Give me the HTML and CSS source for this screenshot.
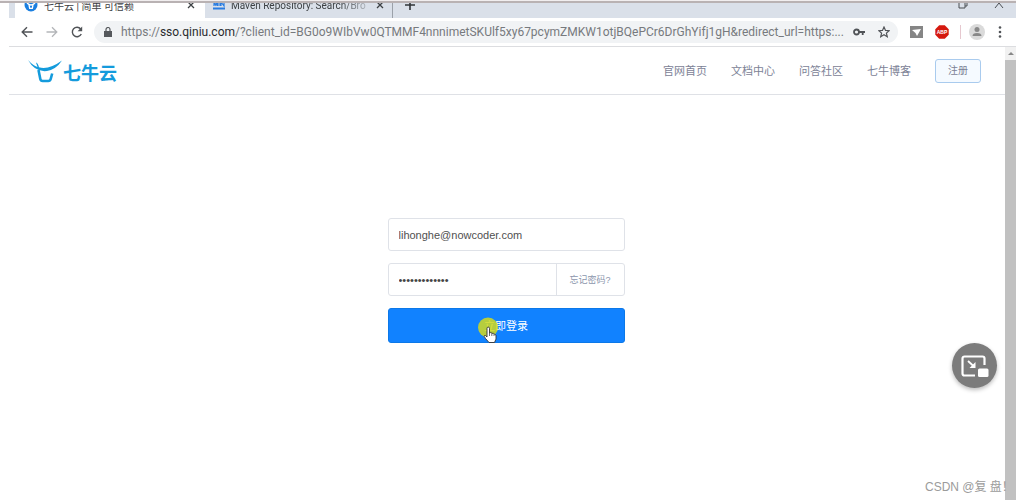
FILE: index.html
```html
<!DOCTYPE html>
<html lang="zh-CN">
<head>
<meta charset="utf-8">
<title>七牛云 | 简单 可信赖</title>
<link rel="stylesheet" href="styles.css">
</head>
<body>
<div class="browser">
  <div class="tabstrip">
    <div class="tab tab-active">
      <svg class="favicon" width="14" height="14" viewBox="0 0 14 14"><circle cx="7" cy="7" r="6.5" fill="#1b7fe0"/><path d="M3 5q4 4 8 0M5 7l.7 3.3h2.6L9 7" fill="none" stroke="#fff" stroke-width="1.3"/></svg>
      <span class="tab-title">七牛云 | 简单 可信赖</span>
      <button class="tab-close" aria-label="关闭"><svg width="8" height="8" viewBox="0 0 8 8"><path d="M1 1l6 6M7 1L1 7" stroke="#3c4043" stroke-width="1.3"/></svg></button>
    </div>
    <div class="tab tab-second">
      <svg class="favicon" width="12" height="14" viewBox="0 0 12 14"><path d="M0 10.500h12" stroke="#2a7de1" stroke-width="2"/><path d="M1 8V4l1.500 3L4 4v4M5 4v4M7 4v4M8 8V4l3 4V4" fill="none" stroke="#2a7de1" stroke-width="1.200"/></svg>
      <span class="tab-title tab-fade">Maven Repository: Search/Bro</span>
      <button class="tab-close" aria-label="关闭"><svg width="8" height="8" viewBox="0 0 8 8"><path d="M1 1l6 6M7 1L1 7" stroke="#3c4043" stroke-width="1.3"/></svg></button>
    </div>
    <button class="new-tab" aria-label="新标签页"><svg width="10" height="10" viewBox="0 0 10 10"><path d="M5 0v10M0 5h10" stroke="#303438" stroke-width="1.6"/></svg></button>
    <div class="window-buttons">
      <button aria-label="还原"><svg width="10" height="10" viewBox="0 0 10 10"><path d="M1 3h6v6H1zM3 3V1h6v6H7" fill="none" stroke="#4a4e53"/></svg></button>
      <button aria-label="关闭窗口"><svg width="10" height="10" viewBox="0 0 10 10"><path d="M1 9l4-5 4 5" fill="none" stroke="#4a4e53"/></svg></button>
    </div>
  </div>
  <div class="toolbar">
    <button aria-label="后退"><svg width="12" height="12" viewBox="0 0 12 12"><path d="M11.500 6H1.500M6 1.200L1.200 6 6 10.800" fill="none" stroke="#505357" stroke-width="1.400"/></svg></button>
    <button aria-label="前进"><svg width="12" height="12" viewBox="0 0 12 12"><path d="M.5 6h10M6 1.200L10.800 6 6 10.800" fill="none" stroke="#b4b6b9" stroke-width="1.300"/></svg></button>
    <button aria-label="刷新"><svg width="12" height="12" viewBox="0 0 12 12"><path d="M10.300 8A4.700 4.700 0 1 1 9.700 3" fill="none" stroke="#505357" stroke-width="1.400"/><path d="M11.200.6v4.600H6.600z" fill="#505357"/></svg></button>
    <div class="omnibox">
      <svg width="8" height="10" viewBox="0 0 8 10"><path d="M0 4h8v6H0z" fill="#55585c"/><path d="M2 4V2.500a2 2 0 0 1 4 0V4" fill="none" stroke="#55585c" stroke-width="1.200"/></svg>
      <span class="url">https://<span class="host">sso.qiniu.com</span>/?client_id=BG0o9WIbVw0QTMMF4nnnimetSKUlf5xy67pcymZMKW1otjBQePCr6DrGhYifj1gH&amp;redirect_url=https:...</span>
      <button class="key" aria-label="密码"><svg width="12" height="8" viewBox="0 0 12 8"><circle cx="3.500" cy="4" r="2.500" fill="none" stroke="#505357" stroke-width="1.800"/><path d="M6 4h6M9.700 4v3" stroke="#505357" stroke-width="1.800"/></svg></button>
      <button aria-label="收藏"><svg width="12" height="12" viewBox="0 0 12 12"><path d="M6 1l1.500 3.400 3.700.3-2.800 2.400.9 3.600L6 8.800l-3.300 1.900.9-3.600L.8 4.700l3.700-.3z" fill="none" stroke="#505357" stroke-width="1.200"/></svg></button>
    </div>
    <button class="ext" aria-label="扩展"><svg width="13" height="12" viewBox="0 0 13 12"><path d="M0 0h13v12H0z" fill="#858585"/><path d="M2 4l9-1-4 7-1.500-3z" fill="#fff"/></svg></button>
    <button class="adblock" aria-label="Adblock Plus"><svg width="14" height="14" viewBox="0 0 14 14"><path d="M4.200.3h5.600l3.900 3.900v5.600l-3.900 3.900H4.200L.3 9.800V4.200z" fill="#d5190f"/><text x="7" y="9" text-anchor="middle" class="adblock-text">ABP</text></svg></button>
    <span class="divider"></span>
    <button class="avatar" aria-label="用户"><svg width="16" height="16" viewBox="0 0 16 16"><circle cx="8" cy="8" r="8" fill="#dadada"/><circle cx="8" cy="5.500" r="2.500" fill="#888"/><path d="M3.500 12q0-3 4.500-3t4.500 3z" fill="#888"/></svg></button>
    <button class="menu" aria-label="菜单"><svg width="4" height="12" viewBox="0 0 4 12"><g fill="#505357"><circle cx="2" cy="1.500" r="1.300"/><circle cx="2" cy="6" r="1.300"/><circle cx="2" cy="10.500" r="1.300"/></g></svg></button>
  </div>
  <div class="viewport">
    <div class="page">
      <header class="site-header">
        <a class="brand" href="#">
          <svg width="34" height="24" viewBox="0 0 34 24"><path d="M0 1Q5 6.500 9.500 8L8 3.500q2 .5 3 4.800Q21 11 34 1.500 28 10.500 19 12 7 13.500 0 1z" fill="#149bdc"/><path d="M10.500 11l1.800 9q.4 2 2.400 2h5.500q2 0 2.500-2l1.500-5.500" fill="none" stroke="#149bdc" stroke-width="2.600"/></svg>
          <span class="brand-name">七牛云</span>
        </a>
        <nav class="site-nav">
          <a href="#">官网首页</a>
          <a href="#">文档中心</a>
          <a href="#">问答社区</a>
          <a href="#">七牛博客</a>
          <button class="register">注册</button>
        </nav>
      </header>
      <main class="content">
        <form class="login">
          <input class="field" type="text" value="lihonghe@nowcoder.com" aria-label="邮箱">
          <div class="password-row">
            <input class="password" type="password" value="abcdefghijklm" aria-label="密码">
            <a class="forgot" href="#">忘记密码?</a>
          </div>
          <button class="submit" type="button">立即登录
            <span class="pointer"><svg width="24" height="28" viewBox="0 0 24 28"><circle cx="11" cy="10.500" r="10" fill="#d2da1e" fill-opacity=".86"/><path d="M10 20V11.500q0-1.500 1.200-1.500t1.300 1.500V16l1.300-.5 1.200.8 1.500.1 1.200.9 1.300.8v4l-1.500 3.400h-5.500L8.500 21.500q-2-2.500-1-3t2.500 1.500z" fill="#fff" stroke="#333" stroke-width=".9"/><path d="M12.500 16v3M14.800 16.500V19M17 17v2" stroke="#333" stroke-width=".7"/></svg></span>
          </button>
        </form>
      </main>
    </div>
    <div class="scrollbar"><span class="scroll-arrow"></span><span class="thumb"></span></div>
  </div>
  <button class="pip" aria-label="画中画"><svg width="28" height="24" viewBox="0 0 28 24"><path d="M14 21.500H3.500a2 2 0 0 1-2-2v-15a2 2 0 0 1 2-2h18a2 2 0 0 1 2 2V11" fill="none" stroke="#fff" stroke-width="2.200"/><path d="M7 7l6 5.500" fill="none" stroke="#fff" stroke-width="1.800"/><path d="M14.500 8v6H8.500z" fill="#fff"/><rect x="17" y="14.500" width="10.500" height="8.500" rx="1.500" fill="#fff"/></svg></button>
  <div class="watermark">CSDN @复 盘！</div>
</div>
</body>
</html>
```
FILE: styles.css
```css
* { box-sizing: border-box; }
body {
  margin: 0;
  background: #fff;
  font-family: "Liberation Sans", "Noto Sans CJK SC", sans-serif;
  font-size: 12px;
  overflow: hidden;
}
button { border: 0; padding: 0; background: none; font: inherit; display: flex; align-items: center; justify-content: center; }
a { text-decoration: none; }
svg { display: block; flex: none; }
.browser { position: relative; display: flex; flex-direction: column; min-height: 100vh; padding-left: 9px; }
.browser::before { content: ""; position: absolute; inset: 0 0 auto 0; height: 2px; background: #b9b2b3; border-top: 1px solid #f1eeef; z-index: 1; }
.tabstrip { display: flex; align-items: flex-end; height: 18px; overflow: hidden; background: #dae0e9; padding-left: 6px; }
.tab { display: flex; align-items: center; height: 26px; flex: none; font-family: Roboto, "Noto Sans CJK SC", sans-serif; font-size: 10px; color: #3c4043; }
.tab-active { width: 190px; background: #fff; padding: 0 10px 0 9px; }
.tab-second { width: 188px; padding: 0 8px; border-right: 1px solid #9ba1a9; }
.favicon { margin-right: 6px; }
.tab-title { flex: 1; white-space: nowrap; }
.tab-fade { mask-image: linear-gradient(90deg, #000 75%, transparent); }
.new-tab { width: 34px; height: 26px; }
.window-buttons { display: flex; gap: 26px; height: 28px; margin-left: auto; padding-right: 12px; }
.toolbar { display: flex; align-items: center; gap: 13px; height: 29px; padding: 0 14px 0 12px; border-bottom: 1px solid #dcdde0; background: #fff; }
.omnibox { display: flex; align-items: center; flex: 1; min-width: 0; height: 22px; margin-left: -2px; padding: 0 8px 0 10px; border-radius: 11px; background: #f1f3f5; }
.url { flex: 1; min-width: 0; margin-left: 9px; white-space: nowrap; font-family: Roboto, sans-serif; font-size: 12px; color: #777a7e; }
.host { color: #292b2e; }
.key { margin-right: 13px; }
.ext { margin-left: -1px; }
.adblock { margin-left: -1px; }
.adblock-text { font: bold 5px "Liberation Sans", sans-serif; fill: #fff; }
.divider { width: 1px; height: 14px; background: #e6c8cf; margin-left: -2px; }
.avatar { margin-left: -5px; }
.viewport { flex: 1; display: flex; }
.page { flex: 1; min-width: 0; display: flex; flex-direction: column; }
.site-header { display: flex; align-items: center; justify-content: space-between; height: 48px; padding: 0 24px 0 19px; border-bottom: 1px solid #dfe1e6; }
.brand { display: flex; align-items: center; gap: 1px; font-weight: bold; font-size: 18px; line-height: 24px; color: #149bdc; }
.brand-name { padding-top: 6px; }
.site-nav { display: flex; align-items: center; gap: 24px; font-size: 11px; }
.site-nav a { padding-bottom: 2px; color: #7c8296; }
.register { width: 46px; height: 24px; border: 1px solid #a9cbee; border-radius: 3px; background: #f5faff; color: #7c8296; font-size: 10px; padding-bottom: 2px; }
.content { flex: 1; display: flex; justify-content: center; padding: 123px 2px 0 0; }
.login { width: 237px; }
.field, .password-row { width: 100%; height: 33px; border: 1px solid #dfe2e8; border-radius: 3px; background: #fff; }
.field { display: block; padding: 0 10px; font: 11px "Liberation Sans", sans-serif; color: #505050; }
.password-row { display: flex; margin: 12px 0; }
.password { flex: 1; min-width: 0; padding: 0 10px; border: 0; background: none; font: 11px "Liberation Sans", sans-serif; color: #444; }
.forgot { display: flex; align-items: center; justify-content: center; width: 68px; border-left: 1px solid #dfe2e8; font-size: 9px; color: #8b95ac; }
.submit { position: relative; width: 100%; height: 35px; padding-bottom: 2px; border: 1px solid #0c78e8; border-radius: 3px; background: #1182ff; color: #fff; font-size: 11px; }
.pointer { position: absolute; left: 88px; top: 8px; }
.scrollbar { display: flex; flex-direction: column; width: 11px; background: #f1f1f1; }
.scroll-arrow { align-self: center; width: 0; height: 0; margin: 5px 0; border: 3px solid transparent; border-top: 0; border-bottom: 3px solid #888; }
.thumb { flex: 1; background: #c1c1c1; }
.pip { position: absolute; right: 19px; bottom: 112px; width: 45px; height: 45px; border-radius: 50%; background: #7c7c7c; box-shadow: 0 2px 4px #0004; }
.watermark { position: absolute; right: 0; bottom: 4px; width: 91px; white-space: nowrap; font-size: 12px; line-height: 18px; color: #9b9b9b; }
```
